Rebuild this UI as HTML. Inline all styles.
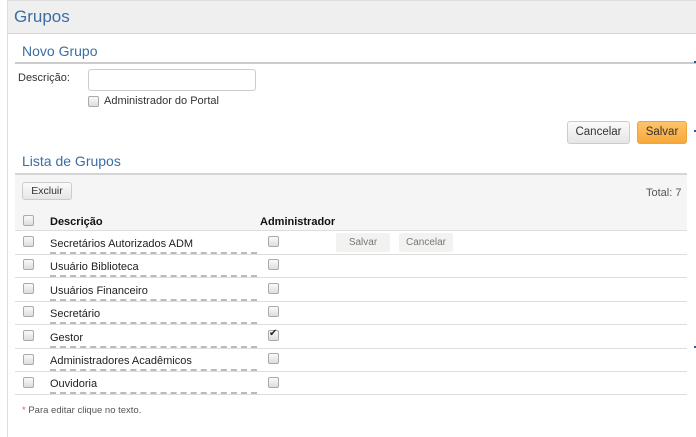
<!DOCTYPE html>
<html><head><meta charset="utf-8"><style>
*{box-sizing:border-box;margin:0;padding:0}
body{width:696px;height:437px;background:#fff;font-family:"Liberation Sans",sans-serif;font-size:12px;color:#333;position:relative;overflow:hidden}
.a{position:absolute}
.cb{position:absolute;width:11px;height:11px;border:1px solid #aaa;border-radius:2px;background:linear-gradient(#fafafa,#ddd)}
.btn{position:absolute;border:1px solid #ccc;border-radius:3px;background:linear-gradient(#fafafa,#e6e6e6);text-align:center;color:#333}
.row{position:absolute;left:15px;width:672px;height:1px;background:#ddd}
.t{position:absolute;left:50px;font-size:11px;color:#222;border-bottom:2px dashed #bbb;width:207px;padding-bottom:1px;line-height:14px}
</style></head><body>
<div class="a" style="left:7px;top:0;width:689px;height:34px;background:#efefef;border-top:1px solid #ddd;border-left:1px solid #ddd;border-bottom:1px solid #d4d4d4"></div>
<div class="a" style="left:7px;top:34px;width:1px;height:403px;background:#ddd"></div>
<div class="a" style="left:14px;top:7px;font-size:17px;color:#3a6ea5">Grupos</div>
<div class="a" style="left:22px;top:43px;font-size:14px;color:#3a6ea5">Novo Grupo</div>
<div class="a" style="left:15px;top:62px;width:681px;height:2px;background:#ccc"></div>
<div class="a" style="left:18px;top:72px;font-size:11px">Descrição:</div>
<div class="a" style="left:88px;top:69px;width:168px;height:22px;border:1px solid #ccc;border-radius:3px"></div>
<div class="cb" style="left:88px;top:96px"></div>
<div class="a" style="left:104px;top:95px;font-size:11px">Administrador do Portal</div>
<div class="btn" style="left:567px;top:121px;width:63px;height:23px;line-height:21px;font-size:11.5px">Cancelar</div>
<div class="btn" style="left:637px;top:121px;width:50px;height:23px;line-height:21px;font-size:11.5px;background:linear-gradient(#fdc46a,#f8a83a);border-color:#f0a33c">Salvar</div>
<div class="a" style="left:22px;top:153px;font-size:14px;color:#3a6ea5">Lista de Grupos</div>
<div class="a" style="left:15px;top:173px;width:672px;height:58px;background:#f5f5f5;border-top:2px solid #d4d4d4;border-bottom:1px solid #ddd"></div>
<div class="btn" style="left:22px;top:182px;width:50px;height:18px;line-height:16px;font-size:10.5px">Excluir</div>
<div class="a" style="left:646px;top:187px;font-size:11px;color:#555">Total: 7</div>
<div class="cb" style="left:23px;top:215px"></div>
<div class="a" style="left:50px;top:216px;font-weight:bold;font-size:11px;color:#111">Descrição</div>
<div class="a" style="left:260px;top:216px;font-weight:bold;font-size:11px;color:#111">Administrador</div>

<div class="row" style="top:254px"></div><div class="row" style="top:277px"></div><div class="row" style="top:301px"></div><div class="row" style="top:324px"></div><div class="row" style="top:348px"></div><div class="row" style="top:371px"></div><div class="row" style="top:394px"></div>

<div class="cb" style="left:23px;top:236px"></div><div class="t" style="top:237px">Secretários Autorizados ADM</div><div class="cb" style="left:268px;top:236px"></div>
<div class="a" style="left:336px;top:233px;width:54px;height:19px;background:#f2f2f0;border-radius:2px;text-align:center;line-height:19px;font-size:10px;color:#777">Salvar</div>
<div class="a" style="left:399px;top:233px;width:54px;height:19px;background:#f2f2f0;border-radius:2px;text-align:center;line-height:19px;font-size:10px;color:#777">Cancelar</div>
<div class="cb" style="left:23px;top:259px"></div><div class="t" style="top:260px">Usuário Biblioteca</div><div class="cb" style="left:268px;top:259px"></div>
<div class="cb" style="left:23px;top:283px"></div><div class="t" style="top:284px">Usuários Financeiro</div><div class="cb" style="left:268px;top:283px"></div>
<div class="cb" style="left:23px;top:306px"></div><div class="t" style="top:307px">Secretário</div><div class="cb" style="left:268px;top:306px"></div>
<div class="cb" style="left:23px;top:330px"></div><div class="t" style="top:331px">Gestor</div><div class="cb" style="left:268px;top:330px"><span style="position:absolute;left:0;top:-3px;font-size:10px;color:#222">✔</span></div>
<div class="cb" style="left:23px;top:354px"></div><div class="t" style="top:354px">Administradores Acadêmicos</div><div class="cb" style="left:268px;top:353px"></div>
<div class="cb" style="left:23px;top:377px"></div><div class="t" style="top:377px">Ouvidoria</div><div class="cb" style="left:268px;top:377px"></div>
<div class="a" style="left:22px;top:405px;font-size:9.5px;color:#555"><span style="color:#c66">*</span> Para editar clique no texto.</div>

<div class="a" style="left:694px;top:61px;width:2px;height:2px;background:#2a5a8a"></div>
<div class="a" style="left:694px;top:130px;width:2px;height:2px;background:#2a5a8a"></div>
<div class="a" style="left:694px;top:346px;width:2px;height:2px;background:#2a5a8a"></div>
</body></html>
